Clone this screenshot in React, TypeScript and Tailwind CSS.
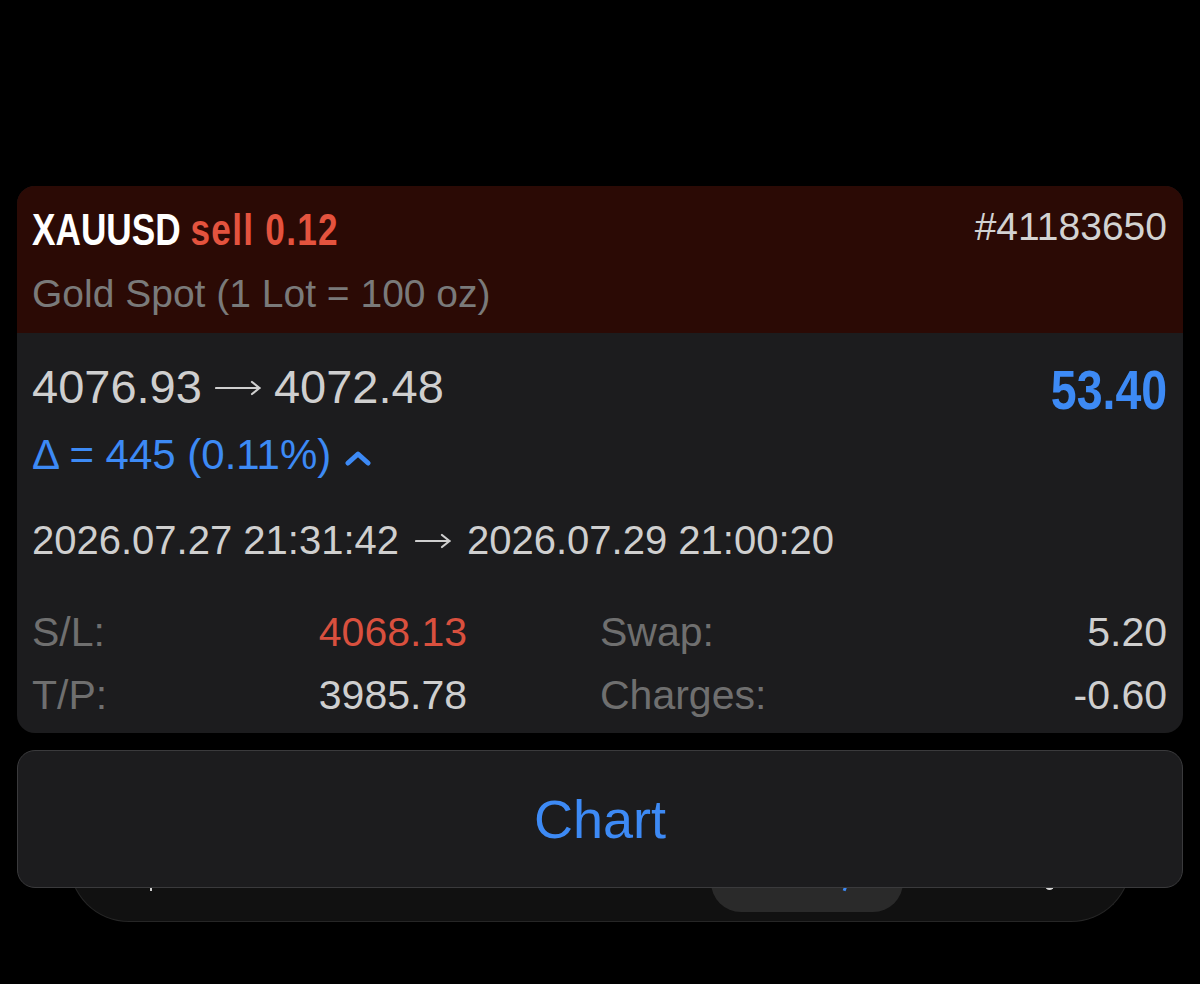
import React from "react";

const sans = { fontFamily: '"Liberation Sans", Arial, Helvetica, sans-serif' };

function Arrow({ w, color }: { w: number; color: string }) {
  return (
    <svg width={w} height="16" viewBox={`0 0 ${w} 16`} className="shrink-0">
      <line x1="1" y1="8" x2={w - 1.5} y2="8" stroke={color} strokeWidth="2.2" strokeLinecap="round" />
      <polyline
        points={`${w - 9},2 ${w - 1.5},8 ${w - 9},14`}
        fill="none"
        stroke={color}
        strokeWidth="2.2"
        strokeLinecap="round"
        strokeLinejoin="round"
      />
    </svg>
  );
}

export default function App() {
  return (
    <div
      className="w-[1200px] h-[984px] bg-black pt-[186px] px-[17px] overflow-hidden"
      style={sans}
    >
      {/* Card */}
      <div className="rounded-[18px] overflow-hidden bg-[#1c1c1e]">
        {/* Header */}
        <div className="bg-[#2b0a05] pt-[19px] pb-[15px] pl-[15px] pr-[16px]">
          <div className="h-[50px] flex items-center justify-between">
            <div className="text-[44px] font-bold leading-none whitespace-nowrap scale-x-[0.8] origin-left">
              <span className="text-white">XAUUSD</span>{" "}
              <span className="text-[#e4533e] tracking-[1.6px]">sell 0.12</span>
            </div>
            <div className="text-[39px] leading-none text-[#d2d2d2] mb-[8px]">#41183650</div>
          </div>
          <div className="h-[50px] mt-[13px] flex items-center text-[39px] leading-none text-[#7a7a7a]">
            Gold Spot (1 Lot = 100 oz)
          </div>
        </div>

        {/* Body */}
        <div className="pt-[28px] pb-[13px] pl-[15px] pr-[16px]">
          <div className="h-[50px] flex items-center justify-between">
            <div className="flex items-center text-[47px] leading-none text-[#cfcfcf]">
              <span>4076.93</span>
              <span className="mx-[13px] mt-[3px] flex">
                <Arrow w={46} color="#cfcfcf" />
              </span>
              <span>4072.48</span>
            </div>
            <div className="text-[56px] font-bold leading-none text-[#3d8af5] mt-[8px] scale-x-[0.83] origin-right">
              53.40
            </div>
          </div>
          <div className="h-[50px] mt-[19px] flex items-center gap-[14px] text-[42px] leading-none text-[#3d8af5]">
            <span>Δ = 445 (0.11%)</span>
            <svg width="26" height="16" viewBox="0 0 26 16" className="mt-[6px]">
              <polyline
                points="3,13 13,4 23,13"
                fill="none"
                stroke="#3d8af5"
                strokeWidth="5"
                strokeLinecap="round"
                strokeLinejoin="round"
              />
            </svg>
          </div>
          <div className="h-[50px] mt-[35px] flex items-center text-[40px] leading-none text-[#cfcfcf]">
            <span>2026.07.27 21:31:42</span>
            <span className="mx-[16px] mt-[2px] flex">
              <Arrow w={36} color="#cfcfcf" />
            </span>
            <span>2026.07.29 21:00:20</span>
          </div>
          <div className="grid grid-cols-[435px_1fr] gap-x-[133px] gap-y-[13px] mt-[42px] text-[41px] leading-none">
            <div className="h-[50px] flex items-center justify-between">
              <span className="text-[#6f6f6f]">S/L:</span>
              <span className="text-[#d9503e]">4068.13</span>
            </div>
            <div className="h-[50px] flex items-center justify-between">
              <span className="text-[#6f6f6f]">Swap:</span>
              <span className="text-[#cfcfcf]">5.20</span>
            </div>
            <div className="h-[50px] flex items-center justify-between">
              <span className="text-[#6f6f6f]">T/P:</span>
              <span className="text-[#cfcfcf]">3985.78</span>
            </div>
            <div className="h-[50px] flex items-center justify-between">
              <span className="text-[#6f6f6f]">Charges:</span>
              <span className="text-[#cfcfcf]">-0.60</span>
            </div>
          </div>
        </div>
      </div>

      {/* Chart button with tab bar behind */}
      <div className="relative mt-[17px]">
        <div className="absolute left-[52px] right-[52px] top-[60px] h-[112px] bg-[#111111] rounded-b-[60px] border-b border-x border-[#262626]">
          <div className="absolute left-[641px] top-[60px] w-[192px] h-[42px] bg-[#2a2a2a] rounded-b-[30px]" />
          <div className="absolute left-[80px] top-[78px] w-[2px] h-[3px] bg-[#cfcfcf]" />
          <div className="absolute left-[774px] top-[73px] w-[3px] h-[8px] bg-[#3d8af5] rotate-[20deg]" />
          <div className="absolute left-[975px] top-[74px] w-[9px] h-[6px] border-b-2 border-x-2 border-[#d8d8d8] rounded-b-full" />
        </div>
        <div className="relative h-[138px] rounded-[18px] bg-[#1c1c1e] border border-[#3a3a3c] flex items-center justify-center">
          <span className="text-[54px] leading-none text-[#3d8af5]">Chart</span>
        </div>
      </div>
    </div>
  );
}
